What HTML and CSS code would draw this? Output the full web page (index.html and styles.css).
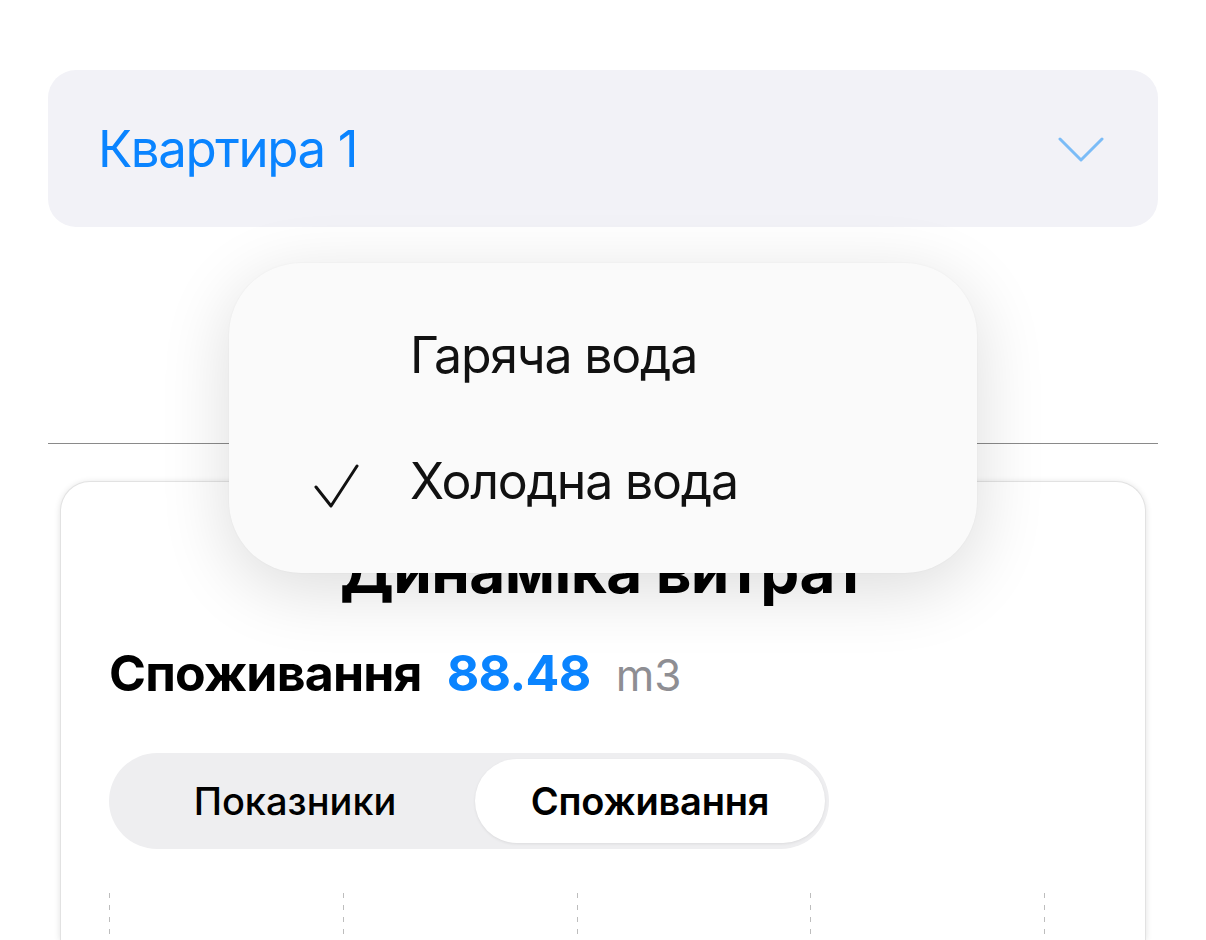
FILE: index.html
```html
<!DOCTYPE html>
<html lang="uk">
<head>
  <meta charset="UTF-8" />
  <title>Динаміка витрат</title>
  <link rel="stylesheet" href="styles.css">
</head>
<body>

  <div class="picker">
    <span class="picker-label">Квартира 1</span>
    <svg class="chevron" width="46" height="26" viewBox="0 0 46 26">
      <polyline points="2,2 23,23 44,2" fill="none" stroke="#7bbcf7" stroke-width="3" stroke-linecap="round" stroke-linejoin="round" />
    </svg>
  </div>

  <div class="divider"></div>

  <div class="card">
    <h2 class="card-title">Динаміка витрат</h2>
    <div class="total">
      <span class="total-label">Споживання</span>
      <span class="total-value">88.48</span>
      <span class="total-unit">m3</span>
    </div>
    <div class="segmented">
      <div class="segment">Показники</div>
      <div class="segment selected">Споживання</div>
    </div>
    <div class="chart">
      <div class="grid-line"></div>
      <div class="grid-line"></div>
      <div class="grid-line"></div>
      <div class="grid-line"></div>
      <div class="grid-line"></div>
    </div>
  </div>

  <div class="menu">
    <div class="menu-item">
      <span class="check"></span>
      <span class="menu-text">Гаряча вода</span>
    </div>
    <div class="menu-item">
      <span class="check">
        <svg width="46" height="46" viewBox="0 0 46 46">
          <polyline points="3,25 18,44 44,4" fill="none" stroke="#111" stroke-width="3" stroke-linecap="round" stroke-linejoin="round" />
        </svg>
      </span>
      <span class="menu-text">Холодна вода</span>
    </div>
  </div>

</body>
</html>
```

FILE: styles.css
```css
html, body {
  margin: 0;
  padding: 0;
  background: #fff;
  font-family: Inter, "Noto Sans", sans-serif;
  color: #000;
  overflow: hidden;
}

body {
  padding: 70px 48px 0;
  height: 940px;
  box-sizing: border-box;
}

.picker {
  height: 157px;
  background: #f2f2f7;
  border-radius: 28px;
  display: flex;
  align-items: center;
  justify-content: space-between;
  padding: 0 54px 0 50px;
}

.picker-label {
  color: #0a84ff;
  font-size: 51px;
  line-height: 60px;
  letter-spacing: -1.4px;
}

.chevron {
  margin-top: 2px;
}

.divider {
  height: 1px;
  background: #8a8a8a;
  margin-top: 216px;
}

.card {
  margin: 37px 12px 0;
  height: 459px;
  background: #fff;
  border: 1px solid #e2e2e2;
  border-bottom: none;
  border-radius: 30px 30px 0 0;
  box-shadow: 0 1px 6px rgba(0, 0, 0, 0.12);
  padding: 54px 100px 0 48px;
  box-sizing: border-box;
}

.card-title {
  margin: 0 -52px 0 0;
  text-align: center;
  font-size: 62px;
  line-height: 70px;
  font-weight: 700;
  letter-spacing: -0.6px;
}

.total {
  display: flex;
  align-items: baseline;
  margin-top: 37px;
  line-height: 60px;
}

.total-label {
  font-size: 50px;
  font-weight: 700;
  letter-spacing: -0.8px;
}

.total-value {
  margin-left: 25px;
  color: #0a84ff;
  font-size: 50px;
  font-weight: 700;
  letter-spacing: -0.6px;
}

.total-unit {
  margin-left: 25px;
  color: #8e8e93;
  font-size: 44px;
}

.segmented {
  margin-top: 48px;
  width: 720px;
  height: 96px;
  box-sizing: border-box;
  padding: 6px 4px 6px 6px;
  background: #eeeef0;
  border-radius: 48px;
  display: grid;
  grid-template-columns: 360px 1fr;
}

.segment {
  display: flex;
  align-items: center;
  justify-content: center;
  font-size: 38px;
  font-weight: 500;
  border-radius: 42px;
}

.segment.selected {
  background: #fff;
  font-weight: 600;
  letter-spacing: -0.2px;
  box-shadow: 0 1px 3px rgba(0, 0, 0, 0.08);
}

.chart {
  margin-top: 44px;
  height: 60px;
  display: flex;
  justify-content: space-between;
}

.grid-line {
  width: 1px;
  height: 100%;
  background: repeating-linear-gradient(to bottom, #bdbdbd 0 5px, transparent 5px 12px);
}

.menu {
  position: absolute;
  left: 229px;
  top: 263px;
  width: 748px;
  height: 310px;
  box-sizing: border-box;
  padding: 29px 0;
  background: #fafafa;
  border-radius: 72px;
  box-shadow: 0 16px 70px rgba(0, 0, 0, 0.14), 0 0 2px rgba(0, 0, 0, 0.05);
}

.menu-item {
  height: 126px;
  display: flex;
  align-items: center;
}

.check {
  width: 46px;
  height: 46px;
  margin-left: 84px;
  margin-right: 51px;
}

.check svg {
  display: block;
  margin-top: 4px;
}

.menu-text {
  font-size: 50px;
  line-height: 60px;
  letter-spacing: -1.2px;
  color: #111;
}
```
